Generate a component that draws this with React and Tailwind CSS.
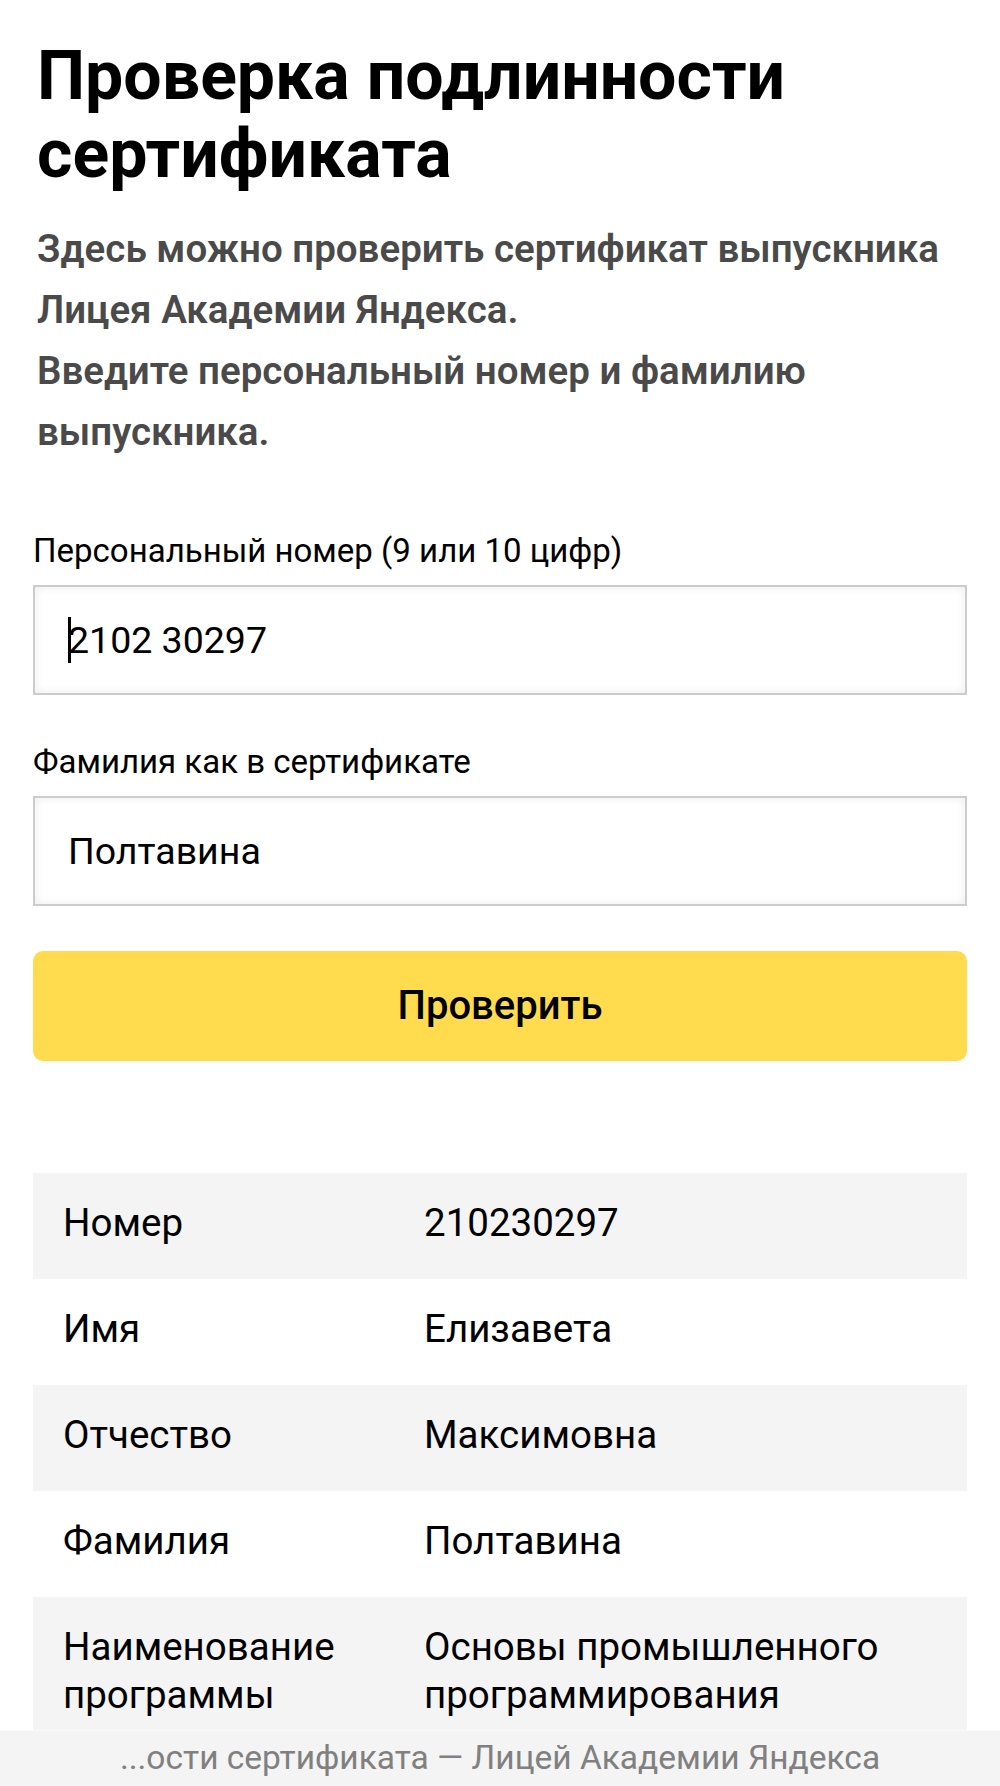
const rows = [
	{ label: 'Номер', value: '210230297' },
	{ label: 'Имя', value: 'Елизавета' },
	{ label: 'Отчество', value: 'Максимовна' },
	{ label: 'Фамилия', value: 'Полтавина' },
	{ label: 'Наименование программы', value: 'Основы промышленного программирования' },
];

function Field({ label, value, caret }) {
	return (
		<div className="mt-[47px] first:mt-0">
			<div className="text-[33px] leading-[40px] text-black">{label}</div>
			<div className="mt-[14px] h-[110px] flex items-center px-[33px] border-2 border-[#cccccc] bg-white shadow-[inset_0_0_10px_rgba(0,0,0,0.08)]">
				{caret && <span className="inline-block w-[3px] h-[46px] bg-black -mr-[3px]" />}
				<span className="text-[37.5px] text-black">{value}</span>
			</div>
		</div>
	);
}

export default function App() {
	return (
		<div className="min-h-screen bg-white font-['Roboto',sans-serif] text-black">
			<main className="px-[33px] pt-[37px] pb-[80px]">
				<h1 className="pl-[4px] text-[68px] leading-[78px] font-bold">
					Проверка подлинности
					<br />
					сертификата
				</h1>
				<p className="mt-[25px] pl-[4px] text-[38.5px] leading-[61px] font-semibold text-[#4a4a4a]">
					Здесь можно проверить сертификат выпускника
					<br />
					Лицея Академии Яндекса.
					<br />
					Введите персональный номер и фамилию выпускника.
				</p>

				<form className="mt-[69px]" onSubmit={(e) => e.preventDefault()}>
					<Field label="Персональный номер (9 или 10 цифр)" value="2102 30297" caret />
					<Field label="Фамилия как в сертификате" value="Полтавина" />
					<button
						type="submit"
						className="mt-[45px] w-full h-[110px] rounded-[10px] bg-[#ffdb4d] text-[40px] font-medium text-black"
					>
						Проверить
					</button>
				</form>

				<div className="mt-[112px]">
					{rows.map((row, i) => (
						<div
							key={row.label}
							className={`grid grid-cols-[361px_1fr] px-[30px] pt-[26px] pb-[32px] text-[38.5px] leading-[48px] ${i % 2 === 0 ? 'bg-[#f4f4f4]' : 'bg-white'}`}
						>
							<div>{row.label}</div>
							<div>{row.value}</div>
						</div>
					))}
				</div>
			</main>

			<div className="fixed inset-x-0 bottom-0 h-[56px] flex items-center justify-center bg-[#f4f4f4] border-t border-[#fafafa]">
				<span className="text-[33.5px] text-[#808080]">...ости сертификата — Лицей Академии Яндекса</span>
			</div>
		</div>
	);
}
